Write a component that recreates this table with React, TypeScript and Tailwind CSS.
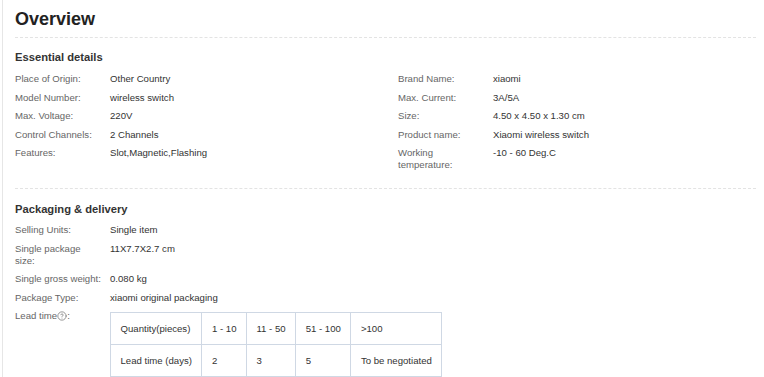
import { CircleHelp } from 'lucide-react';

interface Attribute {
  label: string;
  value: string;
}

const essentialLeft: Attribute[] = [
  { label: 'Place of Origin:', value: 'Other Country' },
  { label: 'Model Number:', value: 'wireless switch' },
  { label: 'Max. Voltage:', value: '220V' },
  { label: 'Control Channels:', value: '2 Channels' },
  { label: 'Features:', value: 'Slot,Magnetic,Flashing' },
];

const essentialRight: Attribute[] = [
  { label: 'Brand Name:', value: 'xiaomi' },
  { label: 'Max. Current:', value: '3A/5A' },
  { label: 'Size:', value: '4.50 x 4.50 x 1.30 cm' },
  { label: 'Product name:', value: 'Xiaomi wireless switch' },
  { label: 'Working temperature:', value: '-10 - 60 Deg.C' },
];

const packaging: Attribute[] = [
  { label: 'Selling Units:', value: 'Single item' },
  { label: 'Single package size:', value: '11X7.7X2.7 cm' },
  { label: 'Single gross weight:', value: '0.080 kg' },
  { label: 'Package Type:', value: 'xiaomi original packaging' },
];

const leadTimes = [
  { quantity: '1 - 10', days: '2' },
  { quantity: '11 - 50', days: '3' },
  { quantity: '51 - 100', days: '5' },
  { quantity: '>100', days: 'To be negotiated' },
];

function AttributeRow({ label, value }: Attribute) {
  return (
    <div className="flex leading-[12px]">
      <div className="w-[95px] shrink-0 pr-[8px] text-[#666]">{label}</div>
      <div className="flex-1 text-[#333]">{value}</div>
    </div>
  );
}

function SectionTitle({ children }: { children: string }) {
  return <h3 className="text-[11.2px] font-bold leading-[14px] text-[#333]">{children}</h3>;
}

export default function App() {
  return (
    <div
      className="h-[377px] overflow-hidden bg-white pl-[2px] text-[9.6px]"
      style={{ fontFamily: '"Liberation Sans", Arial, sans-serif' }}
    >
      <div className="h-full border-l border-[#e6e6e6] pl-[12px] pr-[8px]">
        <h2 className="pt-[8px] text-[18px] font-bold leading-[22px] text-[#222]">Overview</h2>

        <div className="mt-[7px] border-t border-dashed border-[#e3e3e3]" />

        {/* Essential details */}
        <div className="pt-[12px]">
          <SectionTitle>Essential details</SectionTitle>
          <div className="mt-[9px] grid grid-cols-[383px_1fr]">
            <div className="flex flex-col gap-y-[6.5px]">
              {essentialLeft.map((item) => (
                <AttributeRow key={item.label} {...item} />
              ))}
            </div>
            <div className="flex flex-col gap-y-[6.5px]">
              {essentialRight.map((item) => (
                <AttributeRow key={item.label} {...item} />
              ))}
            </div>
          </div>
        </div>

        <div className="mt-[17px] border-t border-dashed border-[#e3e3e3]" />

        {/* Packaging & delivery */}
        <div className="pt-[13px]">
          <SectionTitle>Packaging &amp; delivery</SectionTitle>
          <div className="mt-[8px] flex flex-col gap-y-[6.5px]">
            {packaging.map((item) => (
              <AttributeRow key={item.label} {...item} />
            ))}
            <div className="flex leading-[12px]">
              <div className="flex w-[95px] shrink-0 items-start pr-[8px] text-[#666]">
                Lead time
                <CircleHelp className="mt-[1px] h-[10px] w-[10px]" strokeWidth={1.6} />:
              </div>
              <table className="mt-[2px] border-collapse text-[#333]">
                <tbody>
                  <tr className="h-[32px]">
                    <td className="border border-[#cfd8e4] px-[9.5px]">Quantity(pieces)</td>
                    {leadTimes.map((t) => (
                      <td key={t.quantity} className="border border-[#cfd8e4] px-[9.5px]">
                        {t.quantity}
                      </td>
                    ))}
                  </tr>
                  <tr className="h-[32px]">
                    <td className="border border-[#cfd8e4] px-[9.5px]">Lead time (days)</td>
                    {leadTimes.map((t) => (
                      <td key={t.quantity} className="border border-[#cfd8e4] px-[9.5px]">
                        {t.days}
                      </td>
                    ))}
                  </tr>
                </tbody>
              </table>
            </div>
          </div>
        </div>
      </div>
    </div>
  );
}
